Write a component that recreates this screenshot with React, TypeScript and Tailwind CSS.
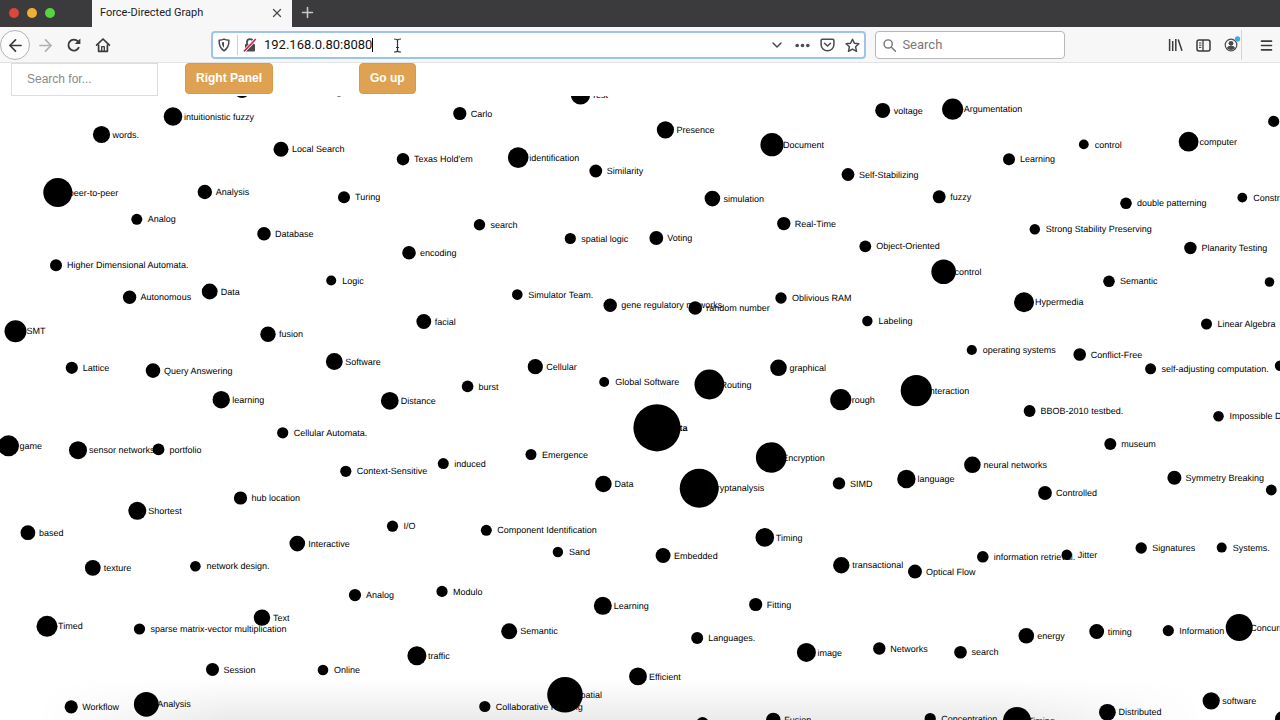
import type { ReactNode } from "react";
import { ArrowLeft, ArrowRight, ChevronDown, Menu, Plus, X } from "lucide-react";

type Node = {
  x: number;
  y: number;
  r: number;
  label?: string;
  bold?: boolean;
};

const TOOLBAR_OFFSET = 96;
const LABEL_DX = 11;

const nodes: Node[] = [
  { x: 242, y: 90, r: 8 },
  { x: 339, y: 92, r: 4.5 },
  { x: 173, y: 116.5, r: 9.3, label: "intuitionistic fuzzy" },
  { x: 101.5, y: 134.5, r: 8.6, label: "words." },
  { x: 281, y: 149.3, r: 7.5, label: "Local Search" },
  { x: 403, y: 159.2, r: 6.2, label: "Texas Hold'em" },
  { x: 57.8, y: 192.4, r: 14.5, label: "peer-to-peer" },
  { x: 204.8, y: 192, r: 7.2, label: "Analysis" },
  { x: 344, y: 197.3, r: 6, label: "Turing" },
  { x: 136.8, y: 219.3, r: 5.5, label: "Analog" },
  { x: 264, y: 233.7, r: 6.8, label: "Database" },
  { x: 409, y: 252.7, r: 6.8, label: "encoding" },
  { x: 56, y: 265.3, r: 6, label: "Higher Dimensional Automata." },
  { x: 331.2, y: 280.5, r: 5, label: "Logic" },
  { x: 129.6, y: 297.2, r: 6.7, label: "Autonomous" },
  { x: 209.7, y: 291.5, r: 7.9, label: "Data" },
  { x: 459.8, y: 113.5, r: 6.6, label: "Carlo" },
  { x: 580.5, y: 95, r: 9.6, label: "Test" },
  { x: 665.4, y: 129.8, r: 8.6, label: "Presence" },
  { x: 772, y: 144.7, r: 11.6, label: "Document" },
  { x: 518.2, y: 157.6, r: 10.3, label: "identification" },
  { x: 595.8, y: 171, r: 6.4, label: "Similarity" },
  { x: 848, y: 174.5, r: 6.4, label: "Self-Stabilizing" },
  { x: 712.4, y: 198.6, r: 7.8, label: "simulation" },
  { x: 479.5, y: 224.7, r: 5.7, label: "search" },
  { x: 783.8, y: 223.6, r: 6.7, label: "Real-Time" },
  { x: 570.3, y: 238.5, r: 5.6, label: "spatial logic" },
  { x: 656.3, y: 238, r: 6.9, label: "Voting" },
  { x: 517.3, y: 294.6, r: 5.3, label: "Simulator Team." },
  { x: 610.2, y: 305.3, r: 6.7, label: "gene regulatory networks" },
  { x: 695.2, y: 308, r: 6.8, label: "random number" },
  { x: 781, y: 298, r: 5.7, label: "Oblivious RAM" },
  { x: 882.7, y: 110.4, r: 7.5, label: "voltage" },
  { x: 952.7, y: 109.2, r: 10.6, label: "Argumentation" },
  { x: 1083.8, y: 144.4, r: 4.9, label: "control" },
  { x: 1188.6, y: 141.7, r: 9.9, label: "computer" },
  { x: 1273.7, y: 121.4, r: 5.6 },
  { x: 1009, y: 159.3, r: 6, label: "Learning" },
  { x: 939.2, y: 196.8, r: 6.5, label: "fuzzy" },
  { x: 1126, y: 203.3, r: 5.8, label: "double patterning" },
  { x: 1242.3, y: 197.6, r: 4.9, label: "Constraint" },
  { x: 1034.8, y: 229.3, r: 5.2, label: "Strong Stability Preserving" },
  { x: 865.3, y: 246.3, r: 5.9, label: "Object-Oriented" },
  { x: 1190.4, y: 248, r: 6.2, label: "Planarity Testing" },
  { x: 943.6, y: 271.8, r: 12.3, label: "control" },
  { x: 1109, y: 281.3, r: 5.8, label: "Semantic" },
  { x: 1269.5, y: 282, r: 4.8 },
  { x: 1024, y: 302.3, r: 10, label: "Hypermedia" },
  { x: 15.5, y: 331.2, r: 11, label: "SMT" },
  { x: 423.8, y: 321.5, r: 7.4, label: "facial" },
  { x: 268, y: 334.2, r: 7.7, label: "fusion" },
  { x: 71.8, y: 367.8, r: 6.1, label: "Lattice" },
  { x: 153, y: 370.6, r: 7.3, label: "Query Answering" },
  { x: 334.3, y: 361.5, r: 8.4, label: "Software" },
  { x: 221.2, y: 399.7, r: 8.7, label: "learning" },
  { x: 389.8, y: 400.8, r: 8.9, label: "Distance" },
  { x: 282.7, y: 432.8, r: 5.6, label: "Cellular Automata." },
  { x: 8.5, y: 445.8, r: 10.5, label: "game" },
  { x: 78, y: 450.2, r: 9, label: "sensor networks" },
  { x: 158.5, y: 449.4, r: 5.9, label: "portfolio" },
  { x: 345.8, y: 471.3, r: 5.6, label: "Context-Sensitive" },
  { x: 240.5, y: 498, r: 6.6, label: "hub location" },
  { x: 137.3, y: 510.8, r: 9, label: "Shortest" },
  { x: 535.3, y: 366.7, r: 7.6, label: "Cellular" },
  { x: 467.6, y: 386.4, r: 5.8, label: "burst" },
  { x: 604.2, y: 382, r: 5, label: "Global Software" },
  { x: 709.4, y: 384.5, r: 14.9, label: "Routing" },
  { x: 778.5, y: 367.8, r: 8.3, label: "graphical" },
  { x: 840.8, y: 399.7, r: 10.6, label: "rough" },
  { x: 657, y: 427.8, r: 23.6, label: "Data", bold: true },
  { x: 531, y: 454.5, r: 5.5, label: "Emergence" },
  { x: 443.3, y: 463.6, r: 5.5, label: "induced" },
  { x: 771.2, y: 457.5, r: 15.3, label: "Encryption" },
  { x: 603.4, y: 484, r: 8.3, label: "Data" },
  { x: 699.2, y: 488.3, r: 19.5, label: "Cryptanalysis" },
  { x: 839, y: 483.4, r: 6.2, label: "SIMD" },
  { x: 867.4, y: 321, r: 5.2, label: "Labeling" },
  { x: 1206.5, y: 324, r: 5.5, label: "Linear Algebra" },
  { x: 971.8, y: 350, r: 5.1, label: "operating systems" },
  { x: 1079.7, y: 354.5, r: 6.3, label: "Conflict-Free" },
  { x: 1150.6, y: 368.8, r: 5.5, label: "self-adjusting computation." },
  { x: 1280, y: 365.7, r: 5.2 },
  { x: 916.3, y: 390.6, r: 15.6, label: "Interaction" },
  { x: 1029.6, y: 411, r: 5.9, label: "BBOB-2010 testbed." },
  { x: 1218.5, y: 416.3, r: 5.3, label: "Impossible Differential" },
  { x: 1110.3, y: 444, r: 6, label: "museum" },
  { x: 972.4, y: 464.8, r: 8.3, label: "neural networks" },
  { x: 906.4, y: 479, r: 9.2, label: "language" },
  { x: 1045, y: 493, r: 6.9, label: "Controlled" },
  { x: 1174.4, y: 477.8, r: 7, label: "Symmetry Breaking" },
  { x: 1271.3, y: 490, r: 5.4 },
  { x: 27.9, y: 532.7, r: 7.4, label: "based" },
  { x: 392.5, y: 526.2, r: 5.6, label: "I/O" },
  { x: 297.3, y: 543.6, r: 7.8, label: "Interactive" },
  { x: 92.8, y: 567.8, r: 7.9, label: "texture" },
  { x: 195.4, y: 566.3, r: 5.3, label: "network design." },
  { x: 355, y: 595.1, r: 6.1, label: "Analog" },
  { x: 262, y: 617.6, r: 8.2, label: "Text" },
  { x: 47, y: 626.3, r: 10.5, label: "Timed" },
  { x: 139.5, y: 629, r: 5.6, label: "sparse matrix-vector multiplication" },
  { x: 212.5, y: 669.4, r: 6.5, label: "Session" },
  { x: 323, y: 670, r: 5.3, label: "Online" },
  { x: 416.9, y: 655.7, r: 9.5, label: "traffic" },
  { x: 71.2, y: 706.8, r: 6.6, label: "Workflow" },
  { x: 146.3, y: 704.3, r: 12.4, label: "Analysis" },
  { x: 486.3, y: 530.3, r: 5.5, label: "Component Identification" },
  { x: 557.9, y: 552, r: 5.2, label: "Sand" },
  { x: 663.1, y: 555.5, r: 7.5, label: "Embedded" },
  { x: 764.8, y: 537.4, r: 9.3, label: "Timing" },
  { x: 841.3, y: 565.2, r: 8.2, label: "transactional" },
  { x: 442, y: 591.4, r: 5.6, label: "Modulo" },
  { x: 602.8, y: 605.8, r: 9, label: "Learning" },
  { x: 755.7, y: 604.5, r: 6.6, label: "Fitting" },
  { x: 509.2, y: 631.3, r: 8, label: "Semantic" },
  { x: 697.2, y: 638, r: 6, label: "Languages." },
  { x: 806.4, y: 652.4, r: 9.5, label: "image" },
  { x: 638, y: 676.4, r: 8.9, label: "Efficient" },
  { x: 565, y: 694.8, r: 17.8, label: "spatial" },
  { x: 484.8, y: 706.5, r: 5.6, label: "Collaborative Filtering" },
  { x: 702.5, y: 723, r: 6 },
  { x: 773.3, y: 720, r: 7.3, label: "Fusion" },
  { x: 982.8, y: 556.8, r: 5.8, label: "information retrieval." },
  { x: 1066.8, y: 554.7, r: 5.2, label: "Jitter" },
  { x: 915, y: 571.6, r: 7, label: "Optical Flow" },
  { x: 1141.2, y: 548, r: 5.7, label: "Signatures" },
  { x: 1221.7, y: 547.6, r: 5, label: "Systems." },
  { x: 1026.3, y: 635.7, r: 7.8, label: "energy" },
  { x: 1096.7, y: 631.5, r: 7.4, label: "timing" },
  { x: 1168.3, y: 630.6, r: 5.6, label: "Information" },
  { x: 1239.2, y: 627.5, r: 13.5, label: "Concurrency" },
  { x: 879.3, y: 648.5, r: 6.2, label: "Networks" },
  { x: 960.5, y: 652.3, r: 6.3, label: "search" },
  { x: 1211.2, y: 700.8, r: 8.6, label: "software" },
  { x: 930.2, y: 718.5, r: 5.6, label: "Concentration" },
  { x: 1017, y: 721, r: 14, label: "Timing" },
  { x: 1107.4, y: 712.3, r: 8.4, label: "Distributed" },
  { x: 1283, y: 719, r: 8 },
];

function NavButton({ label, className = "", children }: { label: string; className?: string; children: ReactNode }) {
  return (
    <button
      type="button"
      aria-label={label}
      className={`flex h-7 w-7 shrink-0 items-center justify-center text-[#3a3a3c] ${className}`}
    >
      {children}
    </button>
  );
}

function TabBar() {
  return (
    <div className="flex h-[27px] shrink-0 items-center bg-[#3b3b3d]">
      <div className="flex w-[92px] shrink-0 items-center gap-2 pb-[2px] pl-[9px]">
        <span className="size-[10px] rounded-full bg-[#e0443e]" />
        <span className="size-[10px] rounded-full bg-[#f0ae35]" />
        <span className="size-[10px] rounded-full bg-[#58d440]" />
      </div>
      <div className="flex h-full w-[200px] shrink-0 items-center justify-between bg-[#f7f7f7] pr-2 pb-px pl-2">
        <span className="text-[11px] text-[#1c1c1e]">Force-Directed Graph</span>
        <button type="button" aria-label="Close tab" className="text-[#4a4a4c]">
          <X size={14} strokeWidth={2.2} />
        </button>
      </div>
      <button type="button" aria-label="New tab" className="ml-[7px] pb-[3px] text-[#c8c8c8]">
        <Plus size={17} strokeWidth={2.2} />
      </button>
    </div>
  );
}

function ReloadIcon() {
  return (
    <svg width="16" height="16" viewBox="0 0 16 16" fill="none" stroke="currentColor" strokeWidth="1.8">
      <path d="M13 10.2A5.5 5.5 0 1 1 12 4.400" />
      <path d="M14.400 1.400v5.600H8.800z" fill="currentColor" stroke="none" />
    </svg>
  );
}

function HomeIcon() {
  return (
    <svg width="16" height="16" viewBox="0 0 16 16" fill="none" stroke="currentColor" strokeWidth="1.7" strokeLinejoin="round" strokeLinecap="round">
      <path d="M1.6 8.200 8 2l6.400 6.200" />
      <path d="M3.600 8v6.300h8.800V8" />
      <path d="M6.700 14v-4.300h2.600V14" strokeWidth="1.3" />
    </svg>
  );
}

function ShieldIcon() {
  return (
    <svg width="14" height="14" viewBox="0 0 14 14" fill="none">
      <path d="M7 1.100c1.600.7 3.200 1 4.900 1.100.1 4.800-1 8.200-4.900 10.600C3.100 10.400 2 7 2.100 2.200 3.800 2.100 5.400 1.800 7 1.100z" stroke="#4a4a4c" strokeWidth="1.500" strokeLinejoin="round" />
      <path d="M7 4v5.800C5.600 8.500 4.900 7 4.900 4.500 5.700 4.400 6.300 4.300 7 4z" fill="#4a4a4c" />
    </svg>
  );
}

function InsecureIcon() {
  return (
    <svg width="14" height="14" viewBox="0 0 14 14" fill="none">
      <path d="M4 6V4.200a3 3 0 0 1 6 0V6" stroke="#4a4a4c" strokeWidth="1.800" />
      <rect x="2" y="6" width="10" height="7.500" rx="1" fill="#4a4a4c" />
      <path d="M1 13.400 12.800 1" stroke="#fff" strokeWidth="3.200" />
      <path d="M1 13.400 12.800 1" stroke="#d0234f" strokeWidth="1.600" />
    </svg>
  );
}

function PocketIcon() {
  return (
    <svg width="15" height="14" viewBox="0 0 15 14" fill="none" stroke="#4a4a4c" strokeWidth="1.500" strokeLinejoin="round" strokeLinecap="round">
      <path d="M2.300 1.200h10.400c.7 0 1.200.5 1.200 1.200v4a6.400 6.400 0 0 1-12.800 0v-4c0-.7.5-1.200 1.200-1.200z" />
      <path d="M4.500 5.200 7.500 8l3-2.800" />
    </svg>
  );
}

function StarIcon() {
  return (
    <svg width="15" height="15" viewBox="0 0 15 15" fill="none" stroke="#4a4a4c" strokeWidth="1.500" strokeLinejoin="round">
      <path d="m7.500 1.200 1.900 4.100 4.500.5-3.300 3 .9 4.500-4-2.200-4 2.200.9-4.500-3.300-3 4.500-.5z" />
    </svg>
  );
}

function LibraryIcon() {
  return (
    <svg width="15" height="14" viewBox="0 0 15 14" fill="none" stroke="currentColor" strokeWidth="1.500">
      <path d="M1.600 1v12M4.700 3v10M7.800 1v12M10.200 1.400l3.800 11.400" />
    </svg>
  );
}

function SidebarIcon() {
  return (
    <svg width="15" height="13" viewBox="0 0 15 13" fill="none" stroke="currentColor">
      <rect x="1" y="1" width="13" height="11" rx="2" strokeWidth="1.500" />
      <path d="M7 1v11" strokeWidth="1.300" />
      <path d="M3 4h2.400M3 6.200h2.400M3 8.400h2.400" strokeWidth="1" />
    </svg>
  );
}

function AccountIcon() {
  return (
    <svg width="22" height="20" viewBox="0 0 22 20" fill="none">
      <circle cx="11" cy="10" r="5.800" stroke="#4a4a4c" strokeWidth="1.200" />
      <circle cx="11" cy="8.300" r="2.400" fill="#4a4a4c" />
      <path d="M6.900 13.200c.6-1.700 2-2.400 4.100-2.400s3.500.7 4.100 2.400a5.600 5.600 0 0 1-8.200 0z" fill="#4a4a4c" />
      <circle cx="17.500" cy="4" r="2.700" fill="#45a8e6" />
    </svg>
  );
}

function SearchIcon() {
  return (
    <svg width="15" height="15" viewBox="0 0 15 15" fill="none" stroke="#77777a" strokeWidth="1.600" strokeLinecap="round">
      <circle cx="5.800" cy="5.800" r="4.600" />
      <path d="m9.400 9.400 4.600 4.600" />
    </svg>
  );
}

function NavBar() {
  return (
    <div className="flex h-9 shrink-0 items-center border-b border-[#e3e3e3] bg-[#f7f7f7] pt-px">
      <div className="flex items-center gap-px">
        <button
          type="button"
          aria-label="Back"
          className="flex size-[30px] items-center justify-center rounded-full border border-[#b4b4b4] bg-[#fcfcfc] text-[#3a3a3c]"
        >
          <ArrowLeft size={19} strokeWidth={2.1} />
        </button>
        <NavButton label="Forward" className="text-[#b0b0b0]">
          <ArrowRight size={19} strokeWidth={2.1} />
        </NavButton>
        <NavButton label="Reload">
          <ReloadIcon />
        </NavButton>
        <NavButton label="Home">
          <HomeIcon />
        </NavButton>
      </div>

      <div className="relative ml-[94px] flex h-7 flex-1 items-center rounded-[4px] border-2 border-[#9fc4ec] bg-white">
        <div className="flex h-5 items-center border-r border-[#cfcfcf] pr-[6px] pl-1">
          <ShieldIcon />
        </div>
        <div className="pr-[7px] pl-[5px]">
          <InsecureIcon />
        </div>
        <label htmlFor="url" className="sr-only">
          Address
        </label>
        <input
          id="url"
          defaultValue="192.168.0.80:8080"
          className="min-w-0 flex-1 bg-transparent text-[13px] leading-5 text-[#111] outline-none"
        />
        {/* caret and mouse pointer */}
        <span className="absolute left-[159px] h-[14px] w-px bg-black" />
        <svg className="absolute left-[180px]" width="9" height="15" viewBox="0 0 9 15" fill="none" stroke="#333" strokeWidth="1.200">
          <path d="M1 1c2 0 3.500.3 3.500 1.600v9.800C4.500 13.700 3 14 1 14M8 1c-2 0-3.500.3-3.500 1.600v9.800C4.500 13.700 6 14 8 14M3 9.500h3" />
        </svg>
        <div className="flex items-center gap-[10px] pr-1">
          <button type="button" aria-label="Show history">
            <ChevronDown size={16} strokeWidth={2.200} color="#4a4a4c" />
          </button>
          <button type="button" aria-label="Page actions">
            <svg width="15" height="5" viewBox="0 0 15 5" fill="#4a4a4c">
              <circle cx="2.200" cy="2.500" r="1.800" />
              <circle cx="7.500" cy="2.500" r="1.800" />
              <circle cx="12.800" cy="2.500" r="1.800" />
            </svg>
          </button>
          <button type="button" aria-label="Save to Pocket">
            <PocketIcon />
          </button>
          <button type="button" aria-label="Bookmark this page">
            <StarIcon />
          </button>
        </div>
      </div>

      <div className="ml-[9px] flex h-7 w-[190px] shrink-0 items-center gap-[6px] rounded-[4px] border border-[#b8b8b8] bg-white pl-[7px]">
        <SearchIcon />
        <label htmlFor="web-search" className="sr-only">
          Search the web
        </label>
        <input
          id="web-search"
          placeholder="Search"
          className="w-full min-w-0 bg-transparent text-[13px] leading-5 outline-none placeholder:text-[#77777a]"
        />
      </div>

      <div className="ml-24 flex shrink-0 items-center">
        <NavButton label="Library">
          <LibraryIcon />
        </NavButton>
        <NavButton label="Sidebars">
          <SidebarIcon />
        </NavButton>
        <NavButton label="Account">
          <AccountIcon />
        </NavButton>
        <div className="mr-[10px] -ml-1 h-[30px] w-px bg-[#d4d4d4]" />
        <NavButton label="Menu">
          <Menu size={15} strokeWidth={2.600} />
        </NavButton>
      </div>
    </div>
  );
}

function GraphToolbar() {
  return (
    <div className="flex h-[33px] shrink-0 items-start bg-white pl-[11px] text-[12px]">
      <label htmlFor="node-search" className="sr-only">
        Search nodes
      </label>
      <input
        id="node-search"
        placeholder="Search for..."
        className="h-[33px] w-[147px] border border-[#dddddd] px-[15px] pb-[2px] outline-none placeholder:text-[#8a8a8a]"
      />
      <button type="button" className="ml-[27px] h-[31px] rounded-[4px] border border-[#d99a45] bg-[#dfa253] px-[10px] pb-[2px] font-bold text-white">
        Right Panel
      </button>
      <button type="button" className="ml-[86px] h-[31px] rounded-[4px] border border-[#d99a45] bg-[#dfa253] px-[10px] pb-[2px] font-bold text-white">
        Go up
      </button>
    </div>
  );
}

function Graph() {
  return (
    <svg
      className="min-h-0 w-full flex-1 bg-[linear-gradient(to_right,white_3%,transparent_18%,transparent_78%,white_94%),linear-gradient(to_top,#ebebeb,white_40px)] text-[9px] [text-rendering:geometricPrecision]"
      role="img"
      aria-label="Keyword graph"
    >
      <g transform={`translate(0 ${-TOOLBAR_OFFSET})`}>
        {nodes.map((n) => (
          <g key={`${n.x}-${n.y}`} transform={`translate(${n.x} ${n.y})`}>
            <circle r={n.r} />
            {n.label && (
              <text x={LABEL_DX} dy="0.35em" className={n.bold ? "font-bold" : ""}>
                {n.label}
              </text>
            )}
          </g>
        ))}
      </g>
    </svg>
  );
}

export default function App() {
  return (
    <div className="flex h-screen flex-col overflow-hidden bg-white font-[Roboto,sans-serif]">
      <TabBar />
      <NavBar />
      <main className="flex min-h-0 flex-1 flex-col font-['Liberation_Sans',Arial,sans-serif]">
        <GraphToolbar />
        <Graph />
      </main>
    </div>
  );
}
